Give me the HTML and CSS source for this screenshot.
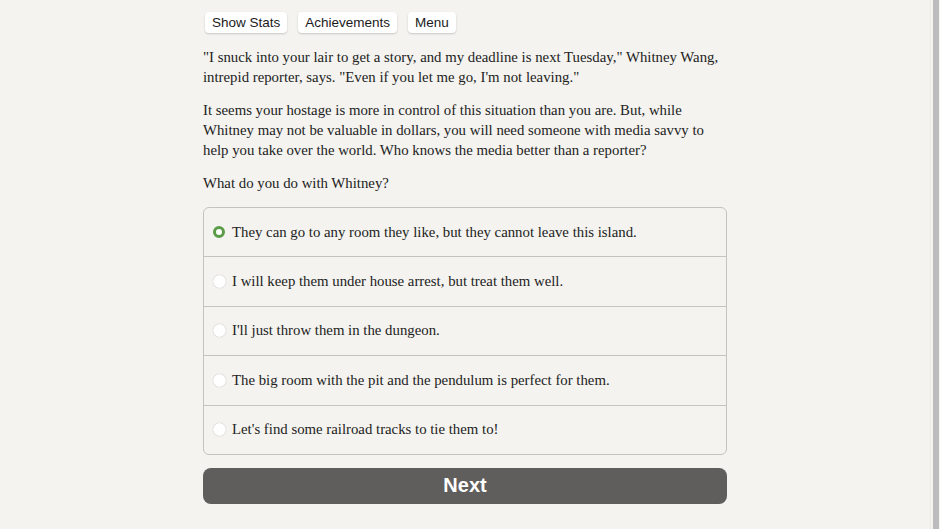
FILE: index.html
```html
<!DOCTYPE html>
<html lang="en">
<head>
<meta charset="utf-8">
<title>Choice of the Deathless</title>
<link rel="stylesheet" href="styles.css">
</head>
<body>
<div class="screen">
  <main class="page">
    <nav class="toolbar">
      <button class="tool-btn">Show Stats</button>
      <button class="tool-btn">Achievements</button>
      <button class="tool-btn">Menu</button>
    </nav>
    <div class="story">
      <p>"I snuck into your lair to get a story, and my deadline is next Tuesday," Whitney Wang, intrepid reporter, says. "Even if you let me go, I'm not leaving."</p>
      <p>It seems your hostage is more in control of this situation than you are. But, while Whitney may not be valuable in dollars, you will need someone with media savvy to help you take over the world. Who knows the media better than a reporter?</p>
      <p>What do you do with Whitney?</p>
    </div>
    <form class="choices">
      <label class="choice"><span class="radio checked"></span><span class="choice-text">They can go to any room they like, but they cannot leave this island.</span></label>
      <label class="choice"><span class="radio"></span><span class="choice-text">I will keep them under house arrest, but treat them well.</span></label>
      <label class="choice"><span class="radio"></span><span class="choice-text">I'll just throw them in the dungeon.</span></label>
      <label class="choice"><span class="radio"></span><span class="choice-text">The big room with the pit and the pendulum is perfect for them.</span></label>
      <label class="choice"><span class="radio"></span><span class="choice-text">Let's find some railroad tracks to tie them to!</span></label>
    </form>
    <button class="next-btn">Next</button>
  </main>
  <div class="scrollbar"><div class="scroll-thumb"></div></div>
</div>
</body>
</html>
```
FILE: styles.css
```css
html, body {
  margin: 0;
  padding: 0;
  background: #f4f3ef;
}

.screen {
  display: flex;
  width: 940px;
  height: 529px;
  overflow: hidden;
}

.page {
  flex: 1;
  display: flex;
  flex-direction: column;
  align-items: center;
  padding-top: 12px;
}

.toolbar,
.story,
.choices,
.next-btn {
  width: 524px;
}

.toolbar {
  display: flex;
  gap: 11px;
  padding-left: 2px;
  box-sizing: border-box;
}

.tool-btn {
  font-family: "Liberation Sans", Arial, sans-serif;
  font-size: 13.5px;
  color: #1a1a1a;
  background: #fff;
  border: none;
  border-radius: 4px;
  box-shadow: 0 1px 2px rgba(0, 0, 0, 0.18);
  height: 21px;
  padding: 0 7px;
  line-height: 21px;
}

.story {
  margin-top: 14px;
  font-family: "Liberation Serif", "Times New Roman", serif;
  font-size: 14.8px;
  line-height: 20px;
  color: #222;
}

.story p {
  margin: 0 0 13px;
}

.story p:last-child {
  margin-bottom: 14px;
}

.choices {
  margin: 0;
  border: 1px solid #c4c3bf;
  border-radius: 6px;
  box-sizing: border-box;
  display: flex;
  flex-direction: column;
}

.choice {
  display: flex;
  align-items: center;
  gap: 6px;
  height: 48.4px;
  padding-left: 9px;
  border-top: 1px solid #c4c3bf;
  font-family: "Liberation Serif", "Times New Roman", serif;
  font-size: 14.8px;
  color: #222;
}

.choice:first-child {
  border-top: none;
}

.radio {
  width: 13px;
  height: 13px;
  border-radius: 50%;
  background: #fff;
  box-shadow: 0 0 1px rgba(0, 0, 0, 0.35);
  flex: none;
  box-sizing: border-box;
}

.radio.checked {
  width: 12px;
  height: 12px;
  margin-right: 1px;
  background: #fff;
  border: 3.5px solid #5a9c48;
  box-shadow: none;
}

.next-btn {
  margin-top: 13px;
  height: 36px;
  border: none;
  border-radius: 8px;
  background: #5f5e5c;
  color: #fff;
  font-family: "Liberation Sans", Arial, sans-serif;
  font-weight: bold;
  font-size: 20px;
}

.scrollbar {
  width: 10px;
  flex: none;
  display: flex;
  justify-content: center;
  border-left: 1px solid #e9eee0;
  box-sizing: border-box;
}

.scroll-thumb {
  width: 6px;
  margin-left: 1px;
  background: #bcbcbe;
}
```
